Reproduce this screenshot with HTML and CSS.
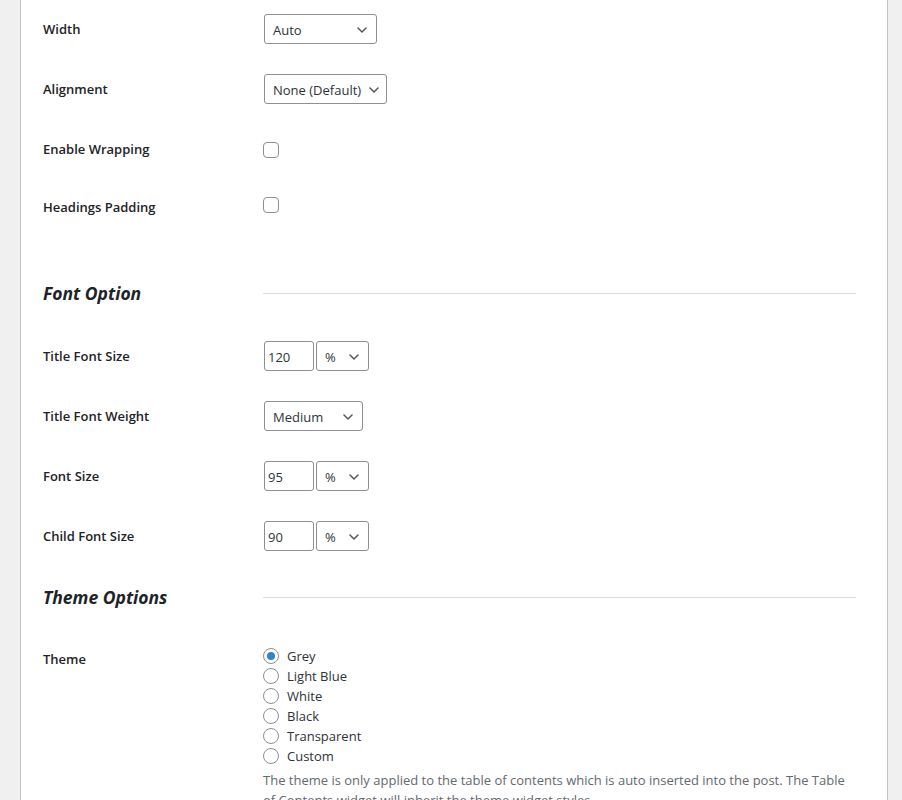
FILE: index.html
```html
<!DOCTYPE html>
<html lang="en">
<head>
<meta charset="utf-8">
<title>Settings</title>
<link rel="stylesheet" href="styles.css">
</head>
<body>
<div class="page">
  <div class="panel">
    <div class="rows">
      <div class="row">
        <div class="label">Width</div>
        <div class="control">
          <div class="select w-auto"><span>Auto</span><svg class="chev" viewBox="0 0 10 6"><path d="M1 1l4 4 4-4"/></svg></div>
        </div>
      </div>
      <div class="row">
        <div class="label">Alignment</div>
        <div class="control">
          <div class="select w-align"><span>None (Default)</span><svg class="chev" viewBox="0 0 10 6"><path d="M1 1l4 4 4-4"/></svg></div>
        </div>
      </div>
      <div class="row">
        <div class="label">Enable Wrapping</div>
        <div class="control"><span class="checkbox"></span></div>
      </div>
      <div class="row row-short">
        <div class="label label-low">Headings Padding</div>
        <div class="control"><span class="checkbox"></span></div>
      </div>
    </div>

    <div class="section-head first">
      <h2>Font Option</h2>
      <div class="rule"></div>
    </div>

    <div class="rows">
      <div class="row">
        <div class="label">Title Font Size</div>
        <div class="control pair">
          <div class="input">120</div>
          <div class="select w-unit"><span>%</span><svg class="chev" viewBox="0 0 10 6"><path d="M1 1l4 4 4-4"/></svg></div>
        </div>
      </div>
      <div class="row">
        <div class="label">Title Font Weight</div>
        <div class="control">
          <div class="select w-medium"><span>Medium</span><svg class="chev" viewBox="0 0 10 6"><path d="M1 1l4 4 4-4"/></svg></div>
        </div>
      </div>
      <div class="row">
        <div class="label">Font Size</div>
        <div class="control pair">
          <div class="input">95</div>
          <div class="select w-unit"><span>%</span><svg class="chev" viewBox="0 0 10 6"><path d="M1 1l4 4 4-4"/></svg></div>
        </div>
      </div>
      <div class="row">
        <div class="label">Child Font Size</div>
        <div class="control pair">
          <div class="input">90</div>
          <div class="select w-unit"><span>%</span><svg class="chev" viewBox="0 0 10 6"><path d="M1 1l4 4 4-4"/></svg></div>
        </div>
      </div>
    </div>

    <div class="section-head second">
      <h2>Theme Options</h2>
      <div class="rule"></div>
    </div>

    <div class="theme-row">
      <div class="label theme-label">Theme</div>
      <div class="theme-control">
        <ul class="radios">
          <li><span class="radio checked"></span>Grey</li>
          <li><span class="radio"></span>Light Blue</li>
          <li><span class="radio"></span>White</li>
          <li><span class="radio"></span>Black</li>
          <li><span class="radio"></span>Transparent</li>
          <li><span class="radio"></span>Custom</li>
        </ul>
        <p class="desc">The theme is only applied to the table of contents which is auto inserted into the post. The Table of Contents widget will inherit the theme widget styles.</p>
      </div>
    </div>
  </div>
</div>
</body>
</html>
```

FILE: styles.css
```css
html, body {
  margin: 0;
  padding: 0;
  background: #f0f0f1;
}

body {
  font-family: "Open Sans", "Noto Sans", sans-serif;
  font-size: 13px;
  color: #2c3338;
}

.page {
  display: flex;
  min-height: 800px;
}

.panel {
  margin-left: 20px;
  margin-right: 14px;
  width: 868px;
  background: #fff;
  border-left: 1px solid #c3c4c7;
  border-right: 1px solid #c3c4c7;
  padding: 0 31px 0 22px;
  box-sizing: border-box;
}

.rows {
  display: flex;
  flex-direction: column;
}

.rows:first-child {
  margin-top: -1px;
}

.row {
  display: grid;
  grid-template-columns: 220px 1fr;
  align-items: center;
  height: 60px;
}

.row-short {
  height: 50px;
}

.label {
  font-weight: 600;
  font-size: 13px;
  color: #1d2327;
  line-height: 20px;
}

.label-low {
  margin-top: 6px;
}

.control {
  display: flex;
  align-items: center;
}

.pair {
  gap: 2px;
}

.select {
  box-sizing: border-box;
  height: 30px;
  margin-left: 1px;
  border: 1px solid #8c8f94;
  border-radius: 3px;
  display: flex;
  align-items: center;
  justify-content: space-between;
  padding: 1px 9px 0 8px;
  font-size: 13px;
  color: #2c3338;
  background: #fff;
}

.chev {
  width: 10px;
  height: 6px;
  fill: none;
  stroke: #50575e;
  stroke-width: 1.5;
  stroke-linecap: round;
  stroke-linejoin: round;
}

.w-auto { width: 113px; }
.w-align { width: 123px; padding-right: 7px; }
.w-medium { width: 99px; }
.w-unit { width: 53px; margin-left: 0; }

.input {
  box-sizing: border-box;
  margin-left: 1px;
  width: 50px;
  height: 30px;
  border: 1px solid #8c8f94;
  border-radius: 3px;
  padding: 1px 3px 0;
  display: flex;
  align-items: center;
  font-size: 13px;
  color: #2c3338;
}

.checkbox {
  box-sizing: border-box;
  display: block;
  width: 16px;
  height: 16px;
  border: 1px solid #8c8f94;
  border-radius: 4px;
  margin-top: 2px;
  background: #fff;
}

.section-head {
  display: grid;
  grid-template-columns: 220px 1fr;
  align-items: center;
  height: 29px;
}

.section-head.first {
  padding: 50px 0 18px;
}

.section-head.second {
  padding: 17px 0 18px;
}

.section-head h2 {
  margin: 0;
  font-size: 17.5px;
  font-style: italic;
  font-weight: 700;
  color: #1d2327;
  line-height: 29px;
}

.rule {
  height: 1px;
  background: #dcdcde;
  margin-top: -1px;
}

.theme-row {
  display: grid;
  grid-template-columns: 220px 1fr;
}

.theme-label {
  padding-top: 19px;
}

.theme-control {
  padding-top: 16px;
}

.radios {
  list-style: none;
  margin: 0;
  padding: 0;
}

.radios li {
  display: flex;
  align-items: center;
  gap: 8px;
  height: 20px;
  font-size: 13px;
  color: #2c3338;
}

.radio {
  box-sizing: border-box;
  width: 16px;
  height: 16px;
  border: 1px solid #8c8f94;
  border-radius: 50%;
  background: #fff;
  display: flex;
  align-items: center;
  justify-content: center;
}

.radio.checked::before {
  content: "";
  width: 8px;
  height: 8px;
  border-radius: 50%;
  background: #3582c4;
}

.desc {
  margin: 4px 0 0;
  font-size: 13px;
  line-height: 20px;
  color: #646970;
}
```
